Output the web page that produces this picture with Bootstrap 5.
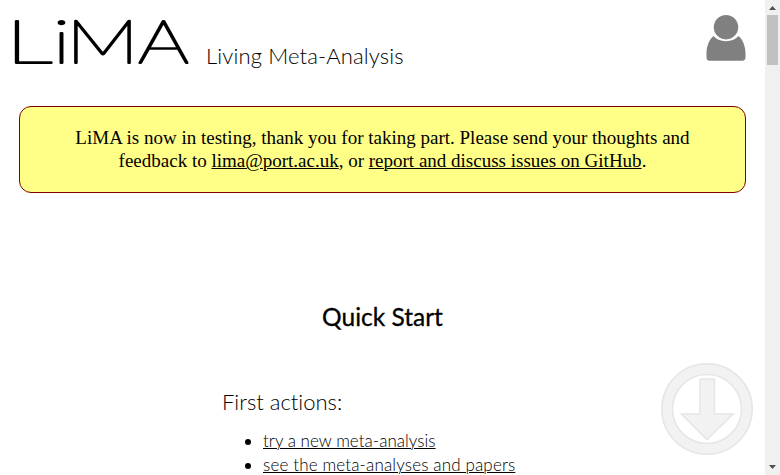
<!DOCTYPE html>
<html lang="en">
<head>
<meta charset="utf-8">
<meta name="viewport" content="width=device-width, initial-scale=1">
<title>LiMA – Living Meta-Analysis</title>
<link href="https://cdn.jsdelivr.net/npm/bootstrap@5.3.0/dist/css/bootstrap.min.css" rel="stylesheet">
<style>
body { font-family: Lato, "Open Sans", sans-serif; font-weight: 300; color: #000; background: #fff; line-height: 1.2; font-variant-ligatures: none; }
a, a:hover { color: #000; text-decoration: underline; text-decoration-thickness: 1px; }
.page-head { height: 106px; padding-left: 9px; padding-right: 19px; }
.brand-logo { width: 190px; height: 80px; font-family: Lato, sans-serif; font-weight: 100; overflow: visible; stroke: #000; stroke-width: 2; stroke-linejoin: round; }
.tagline { font-size: 22px; line-height: 26px; margin: 43px 0 0 7px; white-space: nowrap; letter-spacing: .13px; }
.user-icon { width: 40px; height: 46px; margin-top: 15px; }
.notice { margin: 0 19px; height: 87px; padding: 19px 40px 0; background: #ffff88; border: 1px solid #800000; border-radius: 12px; font-family: "Liberation Serif", serif; font-size: 19px; line-height: 23px; font-weight: 400; }
.quick-title { margin: 109px 0 0; font-size: 24.5px; line-height: 29px; font-weight: 400; -webkit-text-stroke: .3px #000; }
.actions { margin: 58px 0 0 222px; }
.actions h2 { font-size: 22px; line-height: 26px; font-weight: 300; margin: 0 0 14px; }
.actions ul { padding-left: 41px; font-size: 17px; line-height: 24px; }
.actions li:first-child a { letter-spacing: .03px; }
.actions li:last-child a { letter-spacing: .15px; }
.next-arrow { right: 27px; bottom: 20px; width: 92px; height: 92px; }
.scroll-rail { width: 15px; background: #f0f0f0; }
.scroll-thumb { width: 11px; height: 50px; background: #c1c1c1; }
</style>
<script src="https://cdn.jsdelivr.net/npm/bootstrap@5.3.0/dist/js/bootstrap.bundle.min.js"></script>
</head>
<body class="vh-100 overflow-hidden d-flex">
<main class="flex-grow-1 overflow-hidden">
  <header class="page-head d-flex align-items-start">
    <svg class="brand-logo" viewBox="0 0 190 80"><text y="63" font-size="59"><tspan x="-3.500" textLength="47" lengthAdjust="spacingAndGlyphs">L</tspan><tspan x="43.500" textLength="18" lengthAdjust="spacingAndGlyphs">i</tspan><tspan x="57" textLength="73" lengthAdjust="spacingAndGlyphs">M</tspan><tspan x="129" textLength="51" lengthAdjust="spacingAndGlyphs">A</tspan></text></svg>
    <div class="tagline">Living Meta-Analysis</div>
    <svg class="user-icon ms-auto" viewBox="0 0 40 46" fill="#808080"><circle cx="20" cy="12.2" r="12.2"/><path d="M7.500 21C10 24 14.500 26.200 20 26.200S30 24 32.500 21C37 24.500 39.500 32 39.500 38V42Q39.500 45.800 36.500 45.800H3.500Q.5 45.800.5 42V38C.5 32 3 24.500 7.500 21Z"/></svg>
  </header>
  <div class="notice text-center">LiMA is now in testing, thank you for taking part. Please send your thoughts and<br>feedback to <a href="#">lima@port.ac.uk</a>, or <a href="#">report and discuss issues on GitHub</a>.</div>
  <h1 class="quick-title text-center">Quick Start</h1>
  <section class="actions">
    <h2>First actions:</h2>
    <ul class="mb-0">
      <li><a href="#">try a new meta-analysis</a></li>
      <li><a href="#">see the meta-analyses and papers</a></li>
    </ul>
  </section>
</main>
<svg class="next-arrow position-fixed" viewBox="0 0 92 92" fill="#f2f2f2" stroke="#e6e6e6" stroke-width="1.6"><path fill-rule="evenodd" d="M46 .8a45.200 45.200 0 1 0 0 90.400a45.200 45.200 0 1 0 0-90.400ZM46 11.500a34.500 34.500 0 1 1 0 69a34.500 34.500 0 1 1 0-69Z"/><path d="M39 16H53.500V51H72L46 76.500L20.500 51H39Z"/></svg>
<div class="scroll-rail d-flex flex-column align-items-center justify-content-between flex-shrink-0">
  <div class="d-flex flex-column align-items-center">
    <svg width="15" height="15" viewBox="0 0 15 15" fill="#505050"><path d="M4 10L7.500 6L11 10Z"/></svg>
    <div class="scroll-thumb"></div>
  </div>
  <svg width="15" height="15" viewBox="0 0 15 15" fill="#505050"><path d="M4 5H11L7.500 9Z"/></svg>
</div>
</body>
</html>
